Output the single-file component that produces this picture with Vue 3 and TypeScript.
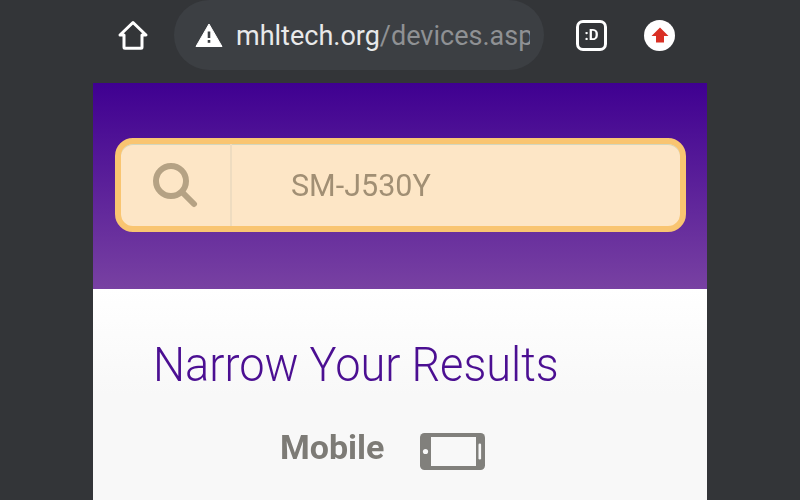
<script setup lang="ts">
// mobile browser view of the device search page
const query = 'SM-J530Y';
</script>

<template>
  <div class="screen">
    <header class="toolbar">
      <svg class="home" viewBox="0 0 32 32" width="32" height="32" aria-hidden="true">
        <path d="M3 16 16 3.5 29 16h-4v12.2a1 1 0 0 1-1 1H8a1 1 0 0 1-1-1V16z" fill="none" stroke="#fff" stroke-width="3" stroke-linejoin="round" />
      </svg>
      <div class="omnibox">
        <svg class="warn" viewBox="0 0 28 24" width="28" height="24" aria-hidden="true">
          <path d="M14 1 27 23.5H1z" fill="#fff" stroke="#fff" stroke-linejoin="round" />
          <rect x="12.7" y="8.5" width="2.6" height="6.5" fill="#3c3f43" />
          <rect x="12.7" y="17" width="2.6" height="2.8" fill="#3c3f43" />
        </svg>
        <div class="url"><span class="host">mhltech.org</span><span class="path">/devices.asp</span></div>
      </div>
      <div class="tab-count">:D</div>
      <div class="update">
        <svg viewBox="0 0 20 20" width="20" height="20" aria-hidden="true">
          <path d="M10 2.5 18.5 11H14v6.5H6V11H1.5z" fill="#d93025" />
        </svg>
      </div>
    </header>

    <main class="page">
      <section class="hero">
        <div class="search">
          <div class="search-icon">
            <svg viewBox="0 0 46 46" width="46" height="46" aria-hidden="true">
              <circle cx="19" cy="19" r="15" fill="none" stroke="#b5a284" stroke-width="6" />
              <path d="M30 30 42 42" stroke="#b5a284" stroke-width="6" stroke-linecap="round" />
            </svg>
          </div>
          <div class="search-text">{{ query }}</div>
        </div>
      </section>
      <section class="results">
        <h1>Narrow Your Results</h1>
        <div class="filter">
          <span class="filter-label">Mobile</span>
          <svg viewBox="0 0 65 37" width="65" height="37" aria-hidden="true">
            <rect width="65" height="37" rx="4.5" fill="#81807c" />
            <rect x="11" y="4" width="45" height="29" fill="#f8f8f8" />
            <circle cx="5.5" cy="18.5" r="2.6" fill="#f8f8f8" />
            <rect x="58.5" y="10.5" width="2.6" height="16" rx="1.3" fill="#f8f8f8" />
          </svg>
        </div>
      </section>
    </main>
  </div>
</template>

<style scoped>
.screen {
  width: 800px;
  height: 500px;
  overflow: hidden;
  background: #333538;
  font-family: Roboto, "Liberation Sans", sans-serif;
}
/* the reference is an upscaled phone capture, so everything is slightly soft */
.toolbar,
.page {
  filter: blur(0.6px);
}
.toolbar {
  height: 83px;
  box-sizing: border-box;
  padding: 0 0 13px 117px;
  display: flex;
  align-items: center;
}
.home {
  flex: none;
}
.omnibox {
  margin-left: 25px;
  width: 370px;
  height: 70px;
  box-sizing: border-box;
  padding: 0 14px 0 21px;
  border-radius: 35px;
  background: #3c3f43;
  display: flex;
  align-items: center;
  gap: 13px;
}
.warn {
  flex: none;
}
.url {
  flex: 1;
  min-width: 0;
  overflow: hidden;
  white-space: nowrap;
  font-size: 27px;
  line-height: 36px;
  padding-top: 2px;
}
.host {
  color: #e8e9ea;
}
.path {
  color: #8f9194;
}
.tab-count {
  margin-left: 32px;
  width: 31px;
  height: 31px;
  box-sizing: border-box;
  border: 3px solid #fff;
  border-radius: 7px;
  color: #fff;
  font-size: 15px;
  font-weight: 700;
  display: flex;
  align-items: center;
  justify-content: center;
}
.update {
  margin-left: 37px;
  width: 31px;
  height: 31px;
  border-radius: 50%;
  background: #fff;
  display: flex;
  align-items: center;
  justify-content: center;
}
.page {
  width: 614px;
  margin-left: 93px;
}
.hero {
  height: 206px;
  box-sizing: border-box;
  padding: 55px 21px 0 22px;
  background: linear-gradient(#3f0091, #7841a2);
}
.search {
  height: 94px;
  box-sizing: border-box;
  border: 6px solid #f9c571;
  border-radius: 18px;
  background: #fde6c6;
  box-shadow: inset 0 1px #d3d6bd;
  display: flex;
}
.search-icon {
  width: 111px;
  flex: none;
  box-sizing: border-box;
  padding-left: 31px;
  border-right: 2px solid #eedcc0;
  display: flex;
  align-items: center;
}
.search-text {
  padding-left: 59px;
  color: #a18f74;
  font-size: 30.5px;
  line-height: 84px;
}
.results {
  height: 240px;
  box-sizing: border-box;
  padding: 44px 60px 0;
  background: linear-gradient(#fff, #f8f8f8 44%);
}
h1 {
  margin: 0;
  color: #4b0f92;
  font-size: 48px;
  font-weight: 300;
  line-height: 64px;
  white-space: nowrap;
  transform: scaleX(0.94);
  transform-origin: left;
}
.filter {
  margin-top: 36px;
  padding-left: 127px;
  display: flex;
  align-items: flex-start;
  gap: 36px;
}
.filter-label {
  color: #7d7b76;
  font-size: 34px;
  font-weight: 700;
  line-height: 28px;
}
</style>
